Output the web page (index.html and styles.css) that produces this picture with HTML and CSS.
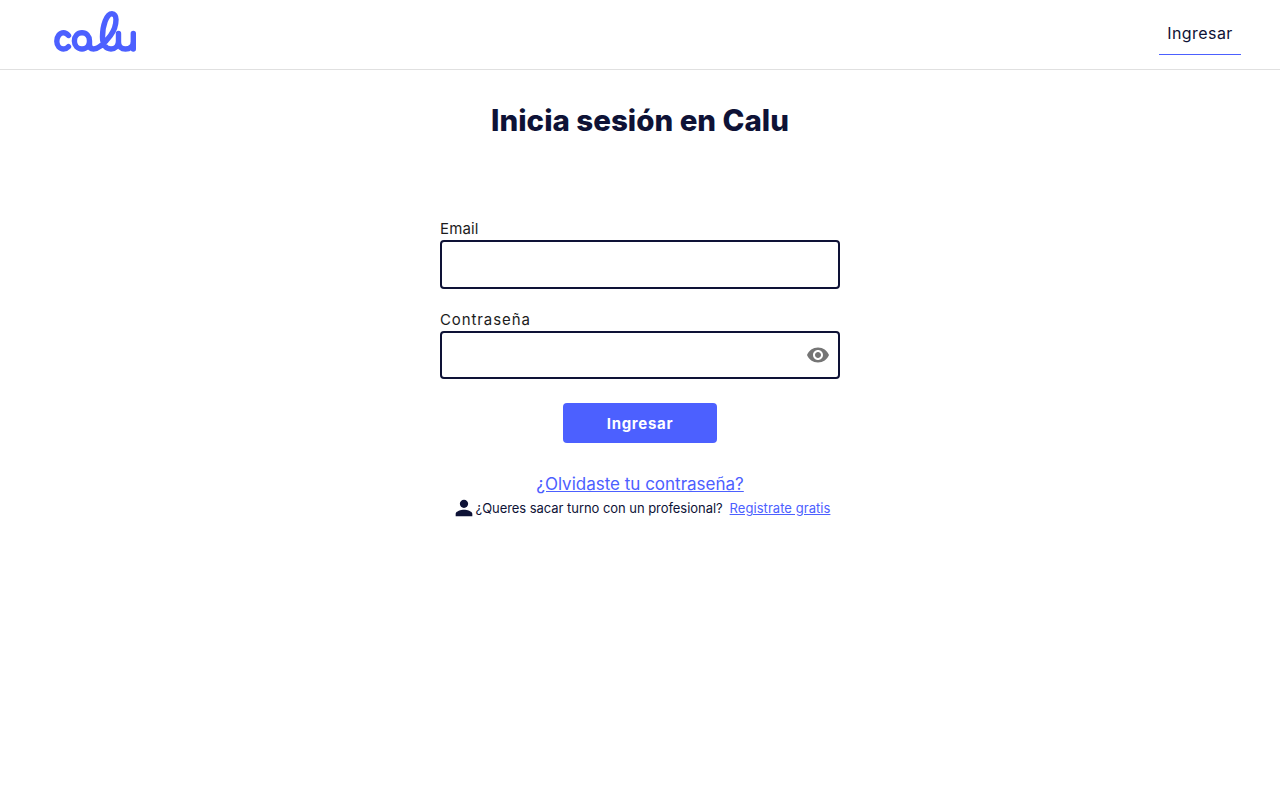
FILE: index.html
```html
<!DOCTYPE html>
<html>

<head>
    <meta charset="UTF-8">
    <title>Calu</title>
    <link rel="stylesheet" href="styles.css">
</head>

<body>
    <header class="topbar">
        <a class="logo" href="#">
            <svg width="84" height="42" viewBox="0 0 84 42" fill="none" stroke="#4c60ff" stroke-width="5.4" stroke-linecap="round" stroke-linejoin="round">
                <path d="M14.5 24.5C13 22.8 11.2 21.8 9.6 21.8C5.6 21.8 2.8 25.6 2.8 30.2C2.8 34.8 5.6 38 9.6 38C11.2 38 13 37.2 14.5 35.6" />
                <path d="M35.5 30C35.5 25.4 32.4 21.8 28 21.8C23.6 21.8 20.4 25.4 20.4 30C20.4 34.6 23.6 38 28 38C32.4 38 35.5 34.6 35.5 30V33.5C35.5 36.6 37 38 39.5 38C44 38 51 32 56.5 24.5C60.5 19 62 13 62 8.5C62 4.8 60.4 2.8 58 2.8C52.5 2.8 48.5 14.5 48.5 26C48.5 33.5 51.5 38 57 38C61 38 64.5 35 64.5 30V22.5V31C64.5 35.5 67.5 38 71.5 38C75.5 38 79.3 35.5 79.3 30.5V22.5V38" />
            </svg>
        </a>
        <nav>
            <a class="nav-link" href="#">Ingresar</a>
        </nav>
    </header>

    <main class="content">
        <h1 class="title">Inicia sesión en Calu</h1>

        <form class="login">
            <label class="field-label" for="email">Email</label>
            <input class="field" id="email" type="email">

            <label class="field-label field-label-wide" for="pass">Contraseña</label>
            <div class="field-wrap">
                <input class="field" id="pass" type="password">
                <svg class="eye" width="24" height="24" viewBox="0 0 24 24" fill="#757575">
                    <path d="M12 4.5C7 4.5 2.73 7.61 1 12c1.73 4.39 6 7.5 11 7.5s9.27-3.11 11-7.5c-1.73-4.39-6-7.5-11-7.5zM12 17c-2.76 0-5-2.24-5-5s2.24-5 5-5 5 2.24 5 5-2.24 5-5 5zm0-8c-1.66 0-3 1.34-3 3s1.34 3 3 3 3-1.34 3-3-1.34-3-3-3z" />
                </svg>
            </div>

            <button class="submit" type="button">Ingresar</button>
        </form>

        <a class="forgot" href="#">¿Olvidaste tu contraseña?</a>

        <p class="signup">
            <svg class="user" width="20" height="20" viewBox="0 0 24 24" fill="#0e1236">
                <path d="M12 12c2.76 0 5-2.24 5-5s-2.24-5-5-5-5 2.24-5 5 2.24 5 5 5zm0 2c-3.34 0-10 1.68-10 5v3h20v-3c0-3.32-6.66-5-10-5z" />
            </svg>
            <span>¿Queres sacar turno con un profesional?</span>
            <a href="#">Registrate gratis</a>
        </p>
    </main>
</body>

</html>
```

FILE: styles.css
```css
html,
body {
    margin: 0;
    height: 100%;
    background: #fff;
}

body {
    font-family: "Inter", "Open Sans", sans-serif;
    color: #0e1236;
}

.topbar {
    display: flex;
    align-items: center;
    justify-content: space-between;
    height: 69px;
    padding: 0 39px 0 54px;
    border-bottom: 1px solid #e0e0e0;
}

.logo {
    display: flex;
    margin-bottom: 5px;
}

.nav-link {
    display: block;
    width: 82px;
    height: 40px;
    border-bottom: 1px solid #4c60ff;
    box-sizing: border-box;
    line-height: 36px;
    text-align: center;
    font-size: 16px;
    letter-spacing: 0.45px;
    color: #0e1236;
    text-decoration: none;
}

.content {
    display: flex;
    flex-direction: column;
    align-items: center;
}

.title {
    margin: 31px 0 0;
    font-size: 29.5px;
    line-height: 39px;
    font-weight: 800;
    color: #0e1236;
}

.login {
    display: flex;
    flex-direction: column;
    width: 400px;
    margin-top: 79px;
}

.field-label {
    height: 21px;
    line-height: 20px;
    font-size: 15px;
    letter-spacing: 0.15px;
    color: #1c1c1c;
}

.field-label-wide {
    letter-spacing: 0.9px;
}

.field {
    display: block;
    box-sizing: border-box;
    width: 100%;
    height: 49px;
    margin: 0 0 21px;
    border: 2px solid #0e1236;
    border-radius: 4px;
    background: #fff;
    outline: none;
}

.field-wrap {
    position: relative;
}

.field-wrap .field {
    height: 48px;
    margin-bottom: 24px;
}

.eye {
    position: absolute;
    top: 12px;
    right: 10px;
}

.submit {
    align-self: center;
    width: 154px;
    height: 40px;
    border: 0;
    border-radius: 4px;
    background: #4c60ff;
    color: #fff;
    font-family: inherit;
    font-size: 15px;
    font-weight: 700;
    letter-spacing: 0.7px;
}

.forgot {
    margin-top: 29px;
    line-height: 24px;
    font-size: 17px;
    color: #4c60ff;
}

.signup {
    display: flex;
    align-items: center;
    margin: 2px 0 0 3px;
    height: 20px;
    font-size: 13px;
    color: #0e1236;
}

.user {
    margin-left: 1px;
}

.signup span {
    margin: 0 7px 0 2px;
    letter-spacing: -0.05px;
}

.signup a {
    color: #4c60ff;
    letter-spacing: 0.05px;
}
```
